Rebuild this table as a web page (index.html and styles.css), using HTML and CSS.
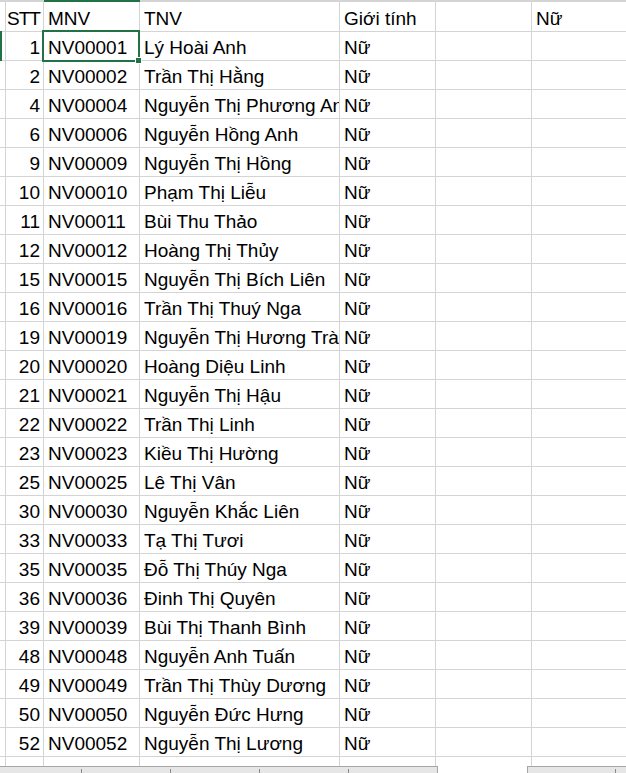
FILE: index.html
```html
<!DOCTYPE html>
<html lang="vi">
<head>
<meta charset="utf-8">
<title>Sheet</title>
<link rel="stylesheet" href="styles.css">
</head>
<body>
<div class="sheet">
  <div class="grid">
    <div class="top"></div><div class="top"></div><div class="top sel"></div><div class="top"></div><div class="top"></div><div class="top"></div><div class="top"></div>

    <div class="rh"></div><div class="c stt">STT</div><div class="c">MNV</div><div class="c">TNV</div><div class="c">Giới tính</div><div class="c"></div><div class="c">Nữ</div>

    <div class="rh"></div><div class="c n">1</div><div class="c">NV00001</div><div class="c">Lý Hoài Anh</div><div class="c">Nữ</div><div class="c"></div><div class="c"></div>
    <div class="rh"></div><div class="c n">2</div><div class="c">NV00002</div><div class="c">Trần Thị Hằng</div><div class="c">Nữ</div><div class="c"></div><div class="c"></div>
    <div class="rh"></div><div class="c n">4</div><div class="c">NV00004</div><div class="c">Nguyễn Thị Phương Anh</div><div class="c">Nữ</div><div class="c"></div><div class="c"></div>
    <div class="rh"></div><div class="c n">6</div><div class="c">NV00006</div><div class="c">Nguyễn Hồng Anh</div><div class="c">Nữ</div><div class="c"></div><div class="c"></div>
    <div class="rh"></div><div class="c n">9</div><div class="c">NV00009</div><div class="c">Nguyễn Thị Hồng</div><div class="c">Nữ</div><div class="c"></div><div class="c"></div>
    <div class="rh"></div><div class="c n">10</div><div class="c">NV00010</div><div class="c">Phạm Thị Liễu</div><div class="c">Nữ</div><div class="c"></div><div class="c"></div>
    <div class="rh"></div><div class="c n">11</div><div class="c">NV00011</div><div class="c">Bùi Thu Thảo</div><div class="c">Nữ</div><div class="c"></div><div class="c"></div>
    <div class="rh"></div><div class="c n">12</div><div class="c">NV00012</div><div class="c">Hoàng Thị Thủy</div><div class="c">Nữ</div><div class="c"></div><div class="c"></div>
    <div class="rh"></div><div class="c n">15</div><div class="c">NV00015</div><div class="c">Nguyễn Thị Bích Liên</div><div class="c">Nữ</div><div class="c"></div><div class="c"></div>
    <div class="rh"></div><div class="c n">16</div><div class="c">NV00016</div><div class="c">Trần Thị Thuý Nga</div><div class="c">Nữ</div><div class="c"></div><div class="c"></div>
    <div class="rh"></div><div class="c n">19</div><div class="c">NV00019</div><div class="c">Nguyễn Thị Hương Trà</div><div class="c">Nữ</div><div class="c"></div><div class="c"></div>
    <div class="rh"></div><div class="c n">20</div><div class="c">NV00020</div><div class="c">Hoàng Diệu Linh</div><div class="c">Nữ</div><div class="c"></div><div class="c"></div>
    <div class="rh"></div><div class="c n">21</div><div class="c">NV00021</div><div class="c">Nguyễn Thị Hậu</div><div class="c">Nữ</div><div class="c"></div><div class="c"></div>
    <div class="rh"></div><div class="c n">22</div><div class="c">NV00022</div><div class="c">Trần Thị Linh</div><div class="c">Nữ</div><div class="c"></div><div class="c"></div>
    <div class="rh"></div><div class="c n">23</div><div class="c">NV00023</div><div class="c">Kiều Thị Hường</div><div class="c">Nữ</div><div class="c"></div><div class="c"></div>
    <div class="rh"></div><div class="c n">25</div><div class="c">NV00025</div><div class="c">Lê Thị Vân</div><div class="c">Nữ</div><div class="c"></div><div class="c"></div>
    <div class="rh"></div><div class="c n">30</div><div class="c">NV00030</div><div class="c">Nguyễn Khắc Liên</div><div class="c">Nữ</div><div class="c"></div><div class="c"></div>
    <div class="rh"></div><div class="c n">33</div><div class="c">NV00033</div><div class="c">Tạ Thị Tươi</div><div class="c">Nữ</div><div class="c"></div><div class="c"></div>
    <div class="rh"></div><div class="c n">35</div><div class="c">NV00035</div><div class="c">Đỗ Thị Thúy Nga</div><div class="c">Nữ</div><div class="c"></div><div class="c"></div>
    <div class="rh"></div><div class="c n">36</div><div class="c">NV00036</div><div class="c">Đinh Thị Quyên</div><div class="c">Nữ</div><div class="c"></div><div class="c"></div>
    <div class="rh"></div><div class="c n">39</div><div class="c">NV00039</div><div class="c">Bùi Thị Thanh Bình</div><div class="c">Nữ</div><div class="c"></div><div class="c"></div>
    <div class="rh"></div><div class="c n">48</div><div class="c">NV00048</div><div class="c">Nguyễn Anh Tuấn</div><div class="c">Nữ</div><div class="c"></div><div class="c"></div>
    <div class="rh"></div><div class="c n">49</div><div class="c">NV00049</div><div class="c">Trần Thị Thùy Dương</div><div class="c">Nữ</div><div class="c"></div><div class="c"></div>
    <div class="rh"></div><div class="c n">50</div><div class="c">NV00050</div><div class="c">Nguyễn Đức Hưng</div><div class="c">Nữ</div><div class="c"></div><div class="c"></div>
    <div class="rh"></div><div class="c n">52</div><div class="c">NV00052</div><div class="c">Nguyễn Thị Lương</div><div class="c">Nữ</div><div class="c"></div><div class="c"></div>
    <div class="rh"></div><div class="c n">53</div><div class="c">NV00053</div><div class="c">Trịnh Xuân Thái</div><div class="c">Nữ</div><div class="c"></div><div class="c"></div>
  </div>

  <div class="row-mark"></div>
  <div class="selection"><span class="handle"></span></div>

  <div class="tabbar">
    <div class="tabs">
      <div class="seg w82"><span class="tick"></span></div>
      <div class="seg w89"><span class="tick"></span></div>
      <div class="seg w89"><span class="tick"></span></div>
      <div class="seg w89"><span class="tick"></span></div>
      <div class="seg w88"></div>
    </div>
    <div class="gap"></div>
    <div class="scroll">
      <div class="seg w88"><span class="tick"></span></div>
    </div>
  </div>
</div>
</body>
</html>
```
FILE: styles.css
```css
html, body {
  margin: 0;
  padding: 0;
  background: #ffffff;
  overflow: hidden;
}

.sheet {
  position: relative;
  width: 626px;
  height: 773px;
  overflow: hidden;
  font-family: "Liberation Sans", Arial, sans-serif;
  font-size: 19px;
  color: #000000;
}

.grid {
  display: grid;
  grid-template-columns: 6px 38px 96px 200px 96px 96px 96px;
  grid-template-rows: 2px 30px;
  grid-auto-rows: 29px;
  width: 628px;
}

.top {
  background: #d4d4d4;
}
.top.sel {
  background: #217346;
}

.rh {
  border-right: 1px solid #d4d4d4;
  border-bottom: 1px solid #d4d4d4;
  background: #ffffff;
}

.c {
  box-sizing: border-box;
  border-right: 1px solid #d4d4d4;
  border-bottom: 1px solid #d4d4d4;
  display: flex;
  align-items: flex-end;
  padding: 0 3px 1px 4px;
  line-height: 22px;
  white-space: nowrap;
  overflow: hidden;
}

.c.n {
  justify-content: flex-end;
}

.c.stt {
  padding-left: 1px;
  letter-spacing: -1px;
}

.row-mark {
  position: absolute;
  left: 0;
  top: 31px;
  width: 2px;
  height: 30px;
  background: #217346;
}

.selection {
  position: absolute;
  left: 42px;
  top: 30px;
  width: 98px;
  height: 32px;
  box-sizing: border-box;
  border: 2px solid #217346;
}

.handle {
  position: absolute;
  right: -4px;
  bottom: -4px;
  width: 5px;
  height: 5px;
  background: #217346;
  border: 1px solid #ffffff;
}

.tabbar {
  position: absolute;
  left: 0;
  bottom: 0;
  width: 626px;
  height: 7px;
  display: flex;
}

.tabs,
.scroll {
  display: flex;
  box-sizing: border-box;
  background: #e6e6e6;
  border-top: 1px solid #a6a6a6;
}

.tabs {
  width: 438px;
  border-right: 1px solid #a6a6a6;
}

.gap {
  width: 89px;
}

.scroll {
  width: 99px;
  border-left: 1px solid #a6a6a6;
}

.seg {
  display: flex;
  justify-content: flex-end;
  align-items: flex-end;
}
.w82 { width: 82px; }
.w89 { width: 89px; }
.w88 { width: 88px; }

.tick {
  width: 1px;
  height: 4px;
  background: #8a8a8a;
}
```
